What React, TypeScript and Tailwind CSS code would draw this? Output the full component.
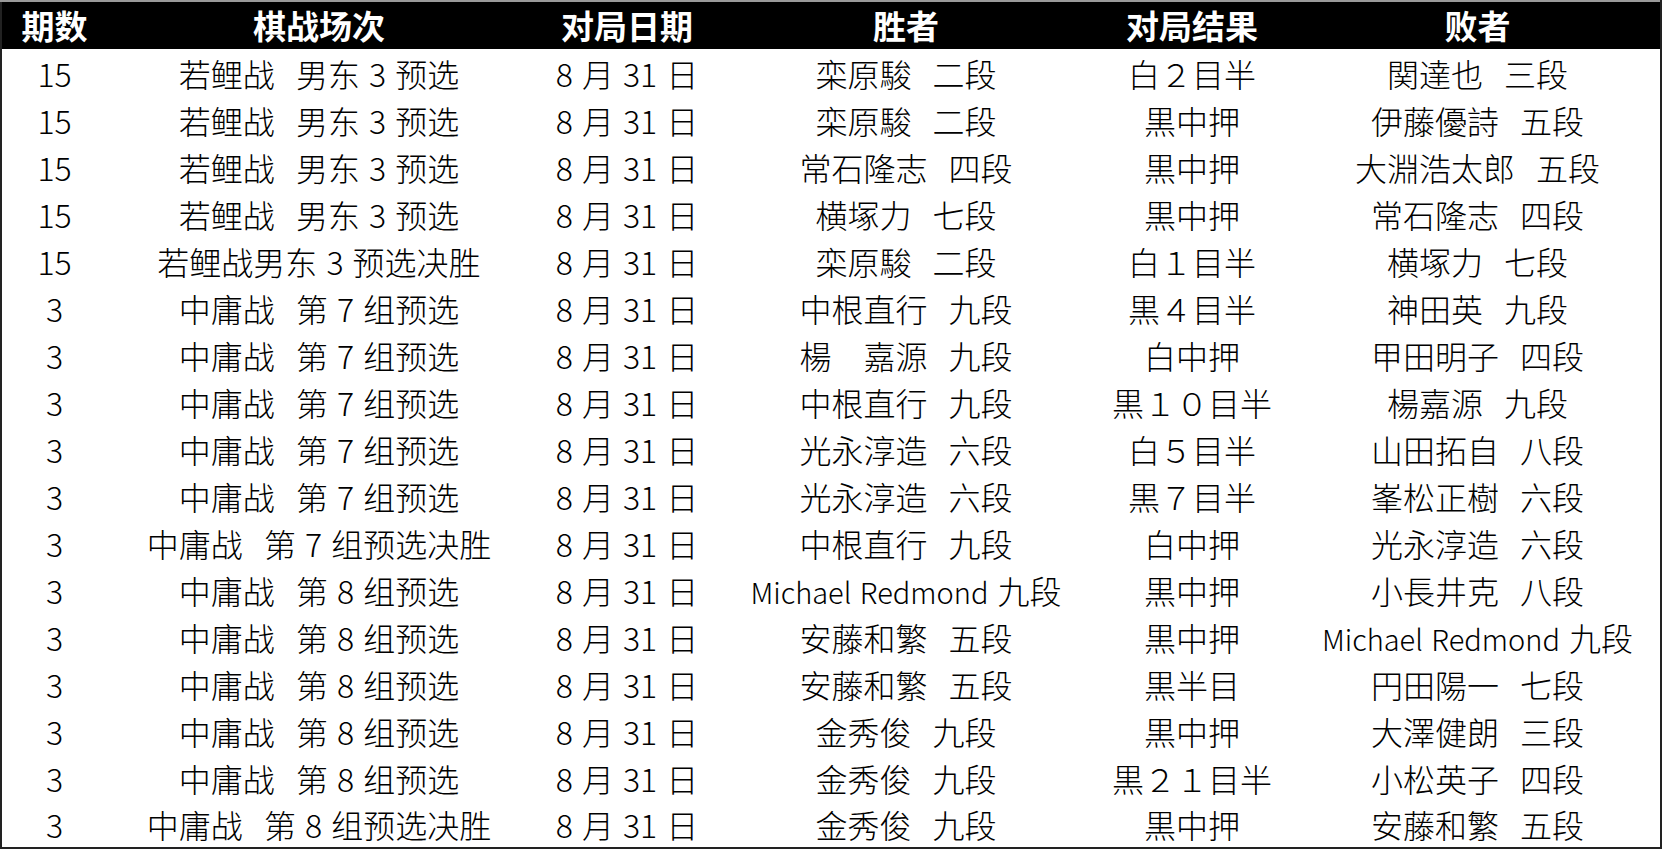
const headers = ['期数', '棋战场次', '对局日期', '胜者', '对局结果', '败者'];

// "|" marks the wider gap used between the name and the rank
const rows: string[][] = [
  ['15', '若鲤战|男东 3 预选', '8 月 31 日', '栾原駿|二段', '白２目半', '関達也|三段'],
  ['15', '若鲤战|男东 3 预选', '8 月 31 日', '栾原駿|二段', '黒中押', '伊藤優詩|五段'],
  ['15', '若鲤战|男东 3 预选', '8 月 31 日', '常石隆志|四段', '黒中押', '大淵浩太郎|五段'],
  ['15', '若鲤战|男东 3 预选', '8 月 31 日', '横塚力|七段', '黒中押', '常石隆志|四段'],
  ['15', '若鲤战男东 3 预选决胜', '8 月 31 日', '栾原駿|二段', '白１目半', '横塚力|七段'],
  ['3', '中庸战|第 7 组预选', '8 月 31 日', '中根直行|九段', '黒４目半', '神田英|九段'],
  ['3', '中庸战|第 7 组预选', '8 月 31 日', '楊　嘉源|九段', '白中押', '甲田明子|四段'],
  ['3', '中庸战|第 7 组预选', '8 月 31 日', '中根直行|九段', '黒１０目半', '楊嘉源|九段'],
  ['3', '中庸战|第 7 组预选', '8 月 31 日', '光永淳造|六段', '白５目半', '山田拓自|八段'],
  ['3', '中庸战|第 7 组预选', '8 月 31 日', '光永淳造|六段', '黒７目半', '峯松正樹|六段'],
  ['3', '中庸战|第 7 组预选决胜', '8 月 31 日', '中根直行|九段', '白中押', '光永淳造|六段'],
  ['3', '中庸战|第 8 组预选', '8 月 31 日', '@Michael Redmond 九段', '黒中押', '小長井克|八段'],
  ['3', '中庸战|第 8 组预选', '8 月 31 日', '安藤和繁|五段', '黒中押', '@Michael Redmond 九段'],
  ['3', '中庸战|第 8 组预选', '8 月 31 日', '安藤和繁|五段', '黒半目', '円田陽一|七段'],
  ['3', '中庸战|第 8 组预选', '8 月 31 日', '金秀俊|九段', '黒中押', '大澤健朗|三段'],
  ['3', '中庸战|第 8 组预选', '8 月 31 日', '金秀俊|九段', '黒２１目半', '小松英子|四段'],
  ['3', '中庸战|第 8 组预选决胜', '8 月 31 日', '金秀俊|九段', '黒中押', '安藤和繁|五段'],
];

function Cell({ text }: { text: string }) {
  if (text.startsWith('@')) {
    const [latin, rank] = [text.slice(1, text.lastIndexOf(' ')), text.slice(text.lastIndexOf(' ') + 1)];
    return (
      <>
        <span className="text-[29px]">{latin}</span> {rank}
      </>
    );
  }
  const parts = text.split('|');
  if (parts.length === 1) return <>{text}</>;
  return (
    <>
      <span className="mr-[12px]">{parts[0]}</span> {parts[1]}
    </>
  );
}

export default function App() {
  return (
    <div className="w-[1663px] h-[851px] bg-white font-['Noto_Sans_CJK_SC','Noto_Sans_CJK_JP',sans-serif]">
      <table className="table-fixed w-[1662px] border-collapse border-2 border-[#222] border-t-[#999]">
        <colgroup>
          <col className="w-[106px]" />
          <col className="w-[424px]" />
          <col className="w-[192px]" />
          <col className="w-[366px]" />
          <col className="w-[206px]" />
          <col />
        </colgroup>
        <thead>
          <tr className="h-[48px] bg-black text-white">
            {headers.map((h) => (
              <th key={h} className="p-0 text-center text-[33px] font-bold leading-none">
                {h}
              </th>
            ))}
          </tr>
        </thead>
        <tbody>
          {rows.map((r, i) => (
            <tr key={i} className="h-[47px] text-black">
              {r.map((c, j) => (
                <td
                  key={j}
                  className="p-0 text-center text-[32px] font-light leading-none whitespace-nowrap [word-spacing:2px]"
                >
                  <Cell text={c} />
                </td>
              ))}
            </tr>
          ))}
        </tbody>
      </table>
    </div>
  );
}
